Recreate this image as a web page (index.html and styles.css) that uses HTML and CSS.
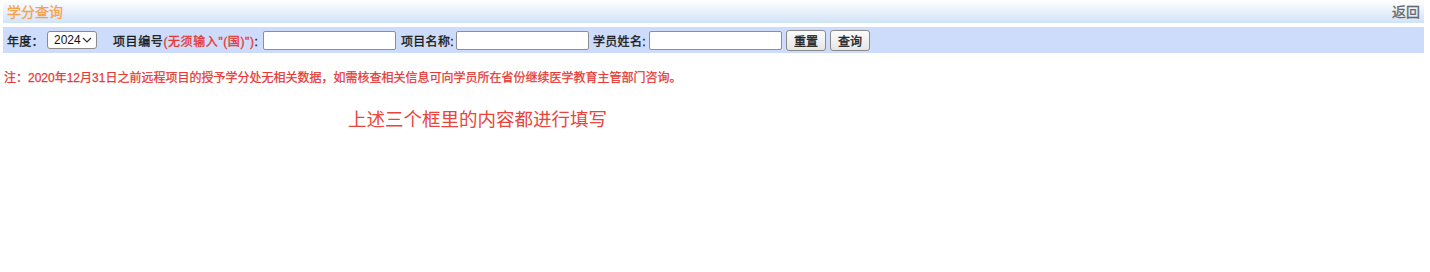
FILE: index.html
```html
<!DOCTYPE html>
<html lang="zh-CN">
<head>
<meta charset="utf-8">
<title>学分查询</title>
<link rel="stylesheet" href="styles.css">
</head>
<body>
<div class="page">
  <div class="header">
    <span class="title">学分查询</span>
    <a class="back">返回</a>
  </div>
  <div class="toolbar">
    <span class="label lbl-year">年度：</span>
    <div class="select"><span>2024</span><svg width="10" height="6" viewBox="0 0 10 6"><path d="M1 1 L5 5 L9 1" fill="none" stroke="#333" stroke-width="1.2"/></svg></div>
    <span class="label lbl-code">项目编号<span class="hint">(无须输入"(国)")</span>:</span>
    <input class="field" type="text">
    <span class="label lbl-name">项目名称:</span>
    <input class="field" type="text">
    <span class="label lbl-stu">学员姓名:</span>
    <input class="field" type="text">
    <button class="btn">重置</button>
    <button class="btn">查询</button>
  </div>
  <p class="note">注：2020年12月31日之前远程项目的授予学分处无相关数据，如需核查相关信息可向学员所在省份继续医学教育主管部门咨询。</p>
  <p class="tip">上述三个框里的内容都进行填写</p>
</div>
</body>
</html>
```

FILE: styles.css
```css
* { box-sizing: border-box; }
html, body { margin: 0; padding: 0; background: #fff; }
body { font-family: "Liberation Sans", "Noto Sans CJK SC", sans-serif; font-size: 12px; color: #222; }
.page { margin: 0 6px 0 3px; }
.header {
  height: 23px;
  display: flex;
  align-items: center;
  justify-content: space-between;
  padding: 0 4px 0 4px;
  background: linear-gradient(#ffffff, #d4e4f8);
  border-bottom: 1px solid #cfe6f2;
}
.title { color: #f4a24c; font-size: 14px; -webkit-text-stroke: 0.3px #f4a24c; }
.back { color: #666; font-size: 14px; -webkit-text-stroke: 0.3px #666; }
.toolbar {
  margin-top: 4px;
  height: 26px;
  background: #cddcfb;
  display: flex;
  align-items: center;
  padding-left: 4px;
}
.label { flex: none; color: #1a1a1a; -webkit-text-stroke: 0.35px #1a1a1a; letter-spacing: 0.3px; white-space: nowrap; }
.hint { color: #e53935; -webkit-text-stroke: 0.35px #e53935; }
.lbl-year { width: 40px; }
.lbl-code { width: 145px; margin-left: 16px; letter-spacing: 0.6px; }
.lbl-name { width: 50px; margin-left: 5px; }
.lbl-stu { width: 51px; margin-left: 4px; }
.select {
  flex: none;
  width: 50px;
  height: 18px;
  border: 1px solid #8a8a8a;
  border-radius: 3px;
  background: #fff;
  display: flex;
  align-items: center;
  justify-content: space-between;
  padding: 0 4px 0 6px;
  font-size: 12px;
  color: #111;
}
.field {
  flex: none;
  width: 133px;
  height: 19px;
  margin: 0 0 0 5px;
  border: 1px solid #8f8f8f;
  border-radius: 2px;
  background: #fff;
  padding: 0;
}
.btn {
  flex: none;
  width: 40px;
  height: 21px;
  margin: 0 0 0 4px;
  padding: 0;
  border: 1px solid #8a8a8a;
  border-radius: 3px;
  background: linear-gradient(#fbfbfb, #e6e6e6);
  font-family: "Liberation Sans", "Noto Sans CJK SC", sans-serif;
  font-size: 12px;
  color: #222;
  -webkit-text-stroke: 0.35px #222;
}
.note {
  margin: 17px 0 0 1px;
  color: #e53935;
  font-size: 12px;
  line-height: 16px;
  -webkit-text-stroke: 0.25px #e53935;
}
.tip {
  margin: 22px 0 0 345px;
  color: #e8453c;
  font-size: 18.5px;
  line-height: 24px;
}
```
